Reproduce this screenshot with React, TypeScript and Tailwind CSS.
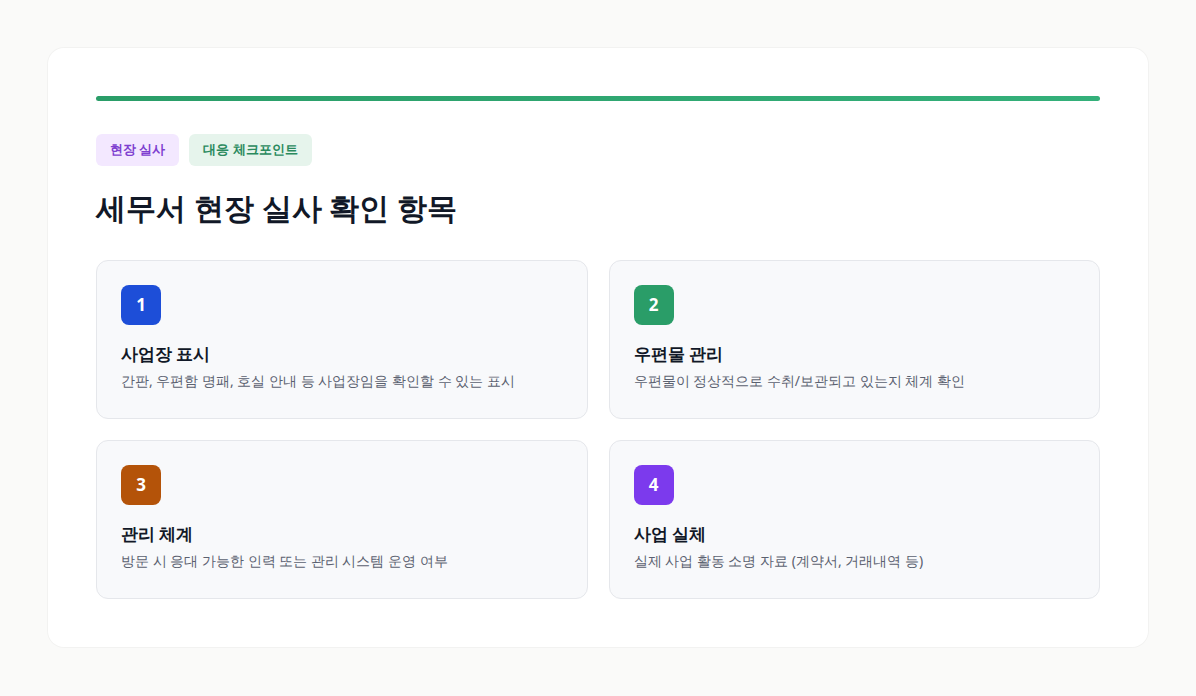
const items = [
  { n: '1', color: 'bg-[#1d4ed8]', title: '사업장 표시', desc: '간판, 우편함 명패, 호실 안내 등 사업장임을 확인할 수 있는 표시' },
  { n: '2', color: 'bg-[#2a9d68]', title: '우편물 관리', desc: '우편물이 정상적으로 수취/보관되고 있는지 체계 확인' },
  { n: '3', color: 'bg-[#b45309]', title: '관리 체계', desc: '방문 시 응대 가능한 인력 또는 관리 시스템 운영 여부' },
  { n: '4', color: 'bg-[#7c3aed]', title: '사업 실체', desc: '실제 사업 활동 소명 자료 (계약서, 거래내역 등)' },
]

export default function App() {
  return (
    <div className="min-h-[696px] bg-[#fafaf9] p-12 font-['Noto_Sans','Noto_Sans_CJK_KR',sans-serif]">
      <div className="rounded-2xl bg-white p-12 shadow-[0_0_0_1px_rgba(0,0,0,0.03)]">
        <div className="h-[5px] rounded-full bg-gradient-to-r from-[#2a9d68] to-[#34b07a]" />
        <div className="mt-[33px] flex gap-2.5">
          <span className="rounded-md bg-[#f3e8ff] px-[14px] py-[6px] text-[13px] font-semibold text-[#7e3fd0]">현장 실사</span>
          <span className="rounded-md bg-[#e6f4ec] px-[14px] py-[6px] text-[13px] font-semibold text-[#2a8a5e]">대응 체크포인트</span>
        </div>
        <h1 className="mt-[22px] text-[30px] font-bold leading-[40px] text-[#111827]">세무서 현장 실사 확인 항목</h1>
        <div className="mt-[32px] grid grid-cols-2 gap-[21px]">
          {items.map((it) => (
            <div key={it.n} className="h-[159px] rounded-xl border border-[#e5e7eb] bg-[#f8f9fb] p-6">
              <div className={`flex h-10 w-10 items-center justify-center rounded-lg ${it.color} text-[17px] font-bold text-white`}>{it.n}</div>
              <div className="mt-[17px] text-[17px] font-semibold leading-6 text-[#111827]">{it.title}</div>
              <div className="mt-[5px] text-[14px] leading-5 text-[#5b6170]">{it.desc}</div>
            </div>
          ))}
        </div>
      </div>
    </div>
  )
}
